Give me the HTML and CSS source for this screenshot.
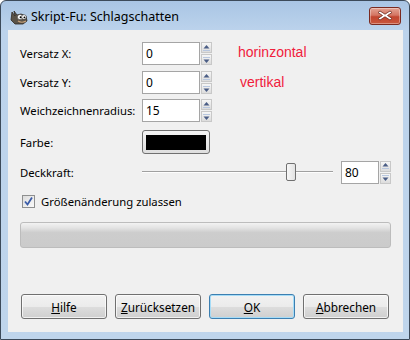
FILE: index.html
```html
<!DOCTYPE html>
<html lang="de">
<head>
    <meta charset="UTF-8">
    <title>Skript-Fu: Schlagschatten</title>
    <link rel="stylesheet" href="styles.css">
</head>
<body>

    <div class="window">
        <!-- Titelleiste -->
        <div class="titlebar">
            <svg class="app-icon" width="18" height="17" viewBox="0 0 18 17">
                <path d="M2 4 L5 8 L4 3 L7 7 L11 6 L16 8 L17 13 L13 16 L5 16 L1 12 Z" fill="#5a5349" stroke="#2e2a25" stroke-width="0.8"/>
                <circle cx="10" cy="9" r="2.6" fill="#fff" stroke="#333" stroke-width="0.5"/>
                <circle cx="14" cy="9" r="2.3" fill="#fff" stroke="#333" stroke-width="0.5"/>
                <circle cx="10.6" cy="9.3" r="1" fill="#000"/>
                <circle cx="14.4" cy="9.3" r="0.9" fill="#000"/>
                <path d="M8 13 Q12 15.5 16 13" fill="none" stroke="#c9a27a" stroke-width="1.2"/>
            </svg>
            <span class="title">Skript-Fu: Schlagschatten</span>
            <div class="close-btn">
                <svg width="16" height="11" viewBox="0 0 16 11">
                    <path d="M3 1 L8 4.2 L13 1 L15 2.5 L10.5 5.5 L15 8.5 L13 10 L8 6.8 L3 10 L1 8.5 L5.5 5.5 L1 2.5 Z" fill="#fff" stroke="#6b2a20" stroke-width="0.8"/>
                </svg>
            </div>
        </div>

        <div class="frame">
            <div class="client">

                <div class="row row-x">
                    <label class="label">Versatz X:</label>
                    <div class="spin">
                        <div class="spin-entry">0</div>
                        <div class="spin-buttons">
                            <div class="spin-btn"><svg width="9" height="8" viewBox="0 0 9 8"><path d="M4.5 1 L7.5 4.5 L1.5 4.5 Z" fill="#4a5d85"/><rect x="1" y="6" width="7" height="1" fill="#b8c7df"/></svg></div>
                            <div class="spin-btn"><svg width="9" height="8" viewBox="0 0 9 8"><rect x="1" y="1" width="7" height="1" fill="#b8c7df"/><path d="M1.5 3.5 L7.5 3.5 L4.5 7 Z" fill="#4a5d85"/></svg></div>
                        </div>
                    </div>
                    <span class="note">horinzontal</span>
                </div>

                <div class="row row-y">
                    <label class="label">Versatz Y:</label>
                    <div class="spin">
                        <div class="spin-entry">0</div>
                        <div class="spin-buttons">
                            <div class="spin-btn"><svg width="9" height="8" viewBox="0 0 9 8"><path d="M4.5 1 L7.5 4.5 L1.5 4.5 Z" fill="#4a5d85"/><rect x="1" y="6" width="7" height="1" fill="#b8c7df"/></svg></div>
                            <div class="spin-btn"><svg width="9" height="8" viewBox="0 0 9 8"><rect x="1" y="1" width="7" height="1" fill="#b8c7df"/><path d="M1.5 3.5 L7.5 3.5 L4.5 7 Z" fill="#4a5d85"/></svg></div>
                        </div>
                    </div>
                    <span class="note note-y">vertikal</span>
                </div>

                <div class="row row-r">
                    <label class="label">Weichzeichnenradius:</label>
                    <div class="spin">
                        <div class="spin-entry">15</div>
                        <div class="spin-buttons">
                            <div class="spin-btn"><svg width="9" height="8" viewBox="0 0 9 8"><path d="M4.5 1 L7.5 4.5 L1.5 4.5 Z" fill="#4a5d85"/><rect x="1" y="6" width="7" height="1" fill="#b8c7df"/></svg></div>
                            <div class="spin-btn"><svg width="9" height="8" viewBox="0 0 9 8"><rect x="1" y="1" width="7" height="1" fill="#b8c7df"/><path d="M1.5 3.5 L7.5 3.5 L4.5 7 Z" fill="#4a5d85"/></svg></div>
                        </div>
                    </div>
                </div>

                <div class="row row-color">
                    <label class="label">Farbe:</label>
                    <div class="color-btn"><div class="swatch"></div></div>
                </div>

                <div class="row row-opacity">
                    <label class="label">Deckkraft:</label>
                    <div class="slider">
                        <div class="slider-line"></div>
                        <div class="slider-thumb"></div>
                    </div>
                    <div class="spin spin-small">
                        <div class="spin-entry">80</div>
                        <div class="spin-buttons">
                            <div class="spin-btn"><svg width="9" height="8" viewBox="0 0 9 8"><path d="M4.5 1 L7.5 4.5 L1.5 4.5 Z" fill="#4a5d85"/><rect x="1" y="6" width="7" height="1" fill="#b8c7df"/></svg></div>
                            <div class="spin-btn"><svg width="9" height="8" viewBox="0 0 9 8"><rect x="1" y="1" width="7" height="1" fill="#b8c7df"/><path d="M1.5 3.5 L7.5 3.5 L4.5 7 Z" fill="#4a5d85"/></svg></div>
                        </div>
                    </div>
                </div>

                <div class="row row-check">
                    <div class="checkbox">
                        <svg width="11" height="11" viewBox="0 0 11 11"><path d="M2 5.5 L4.5 8.5 L9 1.5" fill="none" stroke="#3b5ca8" stroke-width="1.8"/></svg>
                    </div>
                    <span class="check-label">Größenänderung zulassen</span>
                </div>

                <div class="progress"></div>

                <div class="buttons">
                    <div class="btn"><u>H</u>ilfe</div>
                    <div class="btn"><u>Z</u>urücksetzen</div>
                    <div class="btn btn-default"><u>O</u>K</div>
                    <div class="btn"><u>A</u>bbrechen</div>
                </div>

            </div>
        </div>
    </div>

</body>
</html>
```

FILE: styles.css
```css
/* Allgemein */
* {
    margin: 0;
    padding: 0;
    box-sizing: border-box;
}

body {
    background-color: #fff;
    font-family: 'Noto Sans', 'DejaVu Sans', sans-serif;
    font-size: 11.3px;
    color: #000;
}

/* Fenster */
.window {
    width: 410px;
    height: 340px;
    border: 1px solid #3c4a5a;
    border-radius: 6px 6px 0 0;
    background: linear-gradient(#a9c5e4 0px, #bcd3ec 30px, #bfd5ec 100%);
    display: flex;
    flex-direction: column;
    overflow: hidden;
}

.titlebar {
    height: 29px;
    display: flex;
    align-items: center;
    padding-left: 9px;
    padding-right: 8px;
}

.app-icon {
    margin-top: 2px;
}

.title {
    margin-left: 3px;
    margin-top: 2px;
    font-size: 12.5px;
    color: #000;
    flex: 1;
}

.close-btn {
    width: 32px;
    height: 18px;
    border: 1px solid #7a2a20;
    border-radius: 3px;
    background: linear-gradient(#e3a393 0%, #d47563 45%, #c24630 55%, #c9573e 100%);
    display: flex;
    align-items: center;
    justify-content: center;
    box-shadow: inset 0 0 0 1px rgba(255, 255, 255, 0.35);
}

.frame {
    flex: 1;
    padding: 0 6px 7px 7px;
    display: flex;
}

.client {
    flex: 1;
    background-color: #f0f0f0;
    padding: 0 12px 0 12px;
    display: flex;
    flex-direction: column;
}

/* Zeilen */
.row {
    display: flex;
    align-items: center;
    height: 23px;
}

.row-x {
    margin-top: 12px;
}

.row-y {
    margin-top: 6px;
}

.row-r {
    margin-top: 5px;
}

.row-color {
    margin-top: 8px;
    height: 24px;
}

.row-opacity {
    margin-top: 6px;
    height: 24px;
}

.row-check {
    margin-top: 9px;
    height: 16px;
}

.label {
    width: 122px;
    flex-shrink: 0;
}

/* Drehfeld */
.spin {
    display: flex;
    height: 23px;
}

.spin-entry {
    width: 58px;
    height: 23px;
    background-color: #fff;
    border: 1px solid #a5a5a5;
    padding-left: 3px;
    line-height: 21px;
    font-size: 12px;
}

.spin-buttons {
    display: flex;
    flex-direction: column;
    gap: 1px;
    margin-left: 1px;
}

.spin-btn {
    width: 11px;
    height: 11px;
    border: 1px solid #c8c8c8;
    background: linear-gradient(#f6f6f6, #dcdcdc);
    display: flex;
    align-items: center;
    justify-content: center;
}

.spin-small .spin-entry {
    width: 38px;
}

.note {
    margin-left: 26px;
    margin-top: -3px;
    font-family: 'Liberation Sans', Arial, sans-serif;
    font-size: 14px;
    color: #f0203c;
}

.note-y {
    margin-left: 28px;
    margin-top: -2px;
}

/* Farbknopf */
.color-btn {
    width: 68px;
    height: 24px;
    border: 1px solid #707070;
    border-radius: 3px;
    background: linear-gradient(#f4f4f4, #dedede);
    padding: 4px 3px 3px 3px;
}

.swatch {
    width: 100%;
    height: 100%;
    background-color: #000;
}

/* Schieberegler */
.slider {
    position: relative;
    flex: 1;
    height: 24px;
    display: flex;
    align-items: center;
    margin-right: 8px;
}

.slider-line {
    width: 100%;
    height: 2px;
    border-top: 1px solid #a0a0a0;
    border-bottom: 1px solid #fdfdfd;
}

.slider-thumb {
    position: absolute;
    left: 144px;
    top: 3px;
    width: 10px;
    height: 18px;
    border: 1px solid #707070;
    border-radius: 2px;
    background: linear-gradient(90deg, #f7f7f7, #e2e2e2);
}

/* Kontrollkästchen */
.checkbox {
    width: 13px;
    height: 13px;
    margin-left: 2px;
    border: 1px solid #8e8f8f;
    background: linear-gradient(135deg, #dcdcdc, #fafafa);
    display: flex;
    align-items: center;
    justify-content: center;
}

.check-label {
    margin-left: 6px;
}

/* Fortschrittsbalken */
.progress {
    margin-top: 13px;
    height: 26px;
    border: 1px solid #bcbcbc;
    border-radius: 3px;
    background: linear-gradient(#f2f2f2 0%, #e3e3e3 20%, #cdcdcd 40%, #cbcbcb 100%);
}

/* Knöpfe */
.buttons {
    margin-top: 46px;
    display: flex;
    gap: 8px;
    padding-left: 1px;
}

.btn {
    width: 86px;
    height: 25px;
    border: 1px solid #707070;
    border-radius: 3px;
    background: linear-gradient(#f2f2f2 0%, #ebebeb 50%, #dddddd 51%, #cfcfcf 100%);
    box-shadow: inset 0 0 0 1px rgba(255, 255, 255, 0.7);
    display: flex;
    align-items: center;
    justify-content: center;
    font-size: 11.8px;
}

.btn-default {
    border-color: #3c7fb1;
    box-shadow: inset 0 0 0 1px #a6dcf7;
}
```
